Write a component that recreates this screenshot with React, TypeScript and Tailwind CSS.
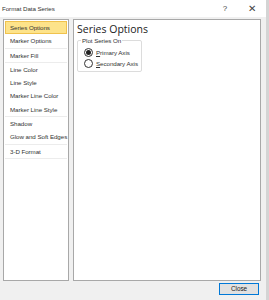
import { useState } from 'react';

const groups = [
  ['Series Options', 'Marker Options'],
  ['Marker Fill'],
  ['Line Color', 'Line Style', 'Marker Line Color', 'Marker Line Style'],
  ['Shadow', 'Glow and Soft Edges'],
  ['3-D Format'],
];

function Radio({ checked, label, hotkey }: { checked: boolean; label: string; hotkey: string }) {
  const rest = label.slice(1);
  return (
    <div className="flex items-center gap-[3px] h-[11px] whitespace-nowrap">
      <span className="w-[9px] h-[9px] shrink-0 rounded-full border border-[#333] bg-white flex items-center justify-center">
        {checked && <span className="w-[5px] h-[5px] rounded-full bg-[#222]" />}
      </span>
      <span>
        <span className="underline">{hotkey}</span>
        {rest}
      </span>
    </div>
  );
}

export default function App() {
  const [selected, setSelected] = useState('Series Options');

  return (
    <div className="w-[269px] h-[300px] bg-[#f0f0f0] flex flex-col text-[#333] font-['Liberation_Sans',sans-serif] text-[6.2px] tracking-[-0.05px] overflow-hidden">
      <div className="h-[17px] bg-white flex items-center pl-[2px] pr-[10px] border-r-[3px] border-[#d4d4d4]">
        <span>Format Data Series</span>
        <span className="ml-auto mr-[21px] text-[8px] text-[#444]">?</span>
        <span className="text-[10px] text-[#444] leading-none">✕</span>
      </div>

      <div className="flex gap-[4px] pl-[3px] pr-[5px] pt-[2px] h-[264px] border-r-[3px] border-[#d4d4d4]">
        <div className="w-[66px] bg-white border border-[#a8a8a8] pt-[1px] px-[1px]">
          {groups.map((g, gi) => (
            <div key={gi} className="border-b border-[#ececec]">
              {g.map((item) => (
                <div
                  key={item}
                  onClick={() => setSelected(item)}
                  className={
                    'h-[13.3px] flex items-center pl-[4px] whitespace-nowrap ' +
                    (selected === item ? 'bg-[#fde38a] border border-[#f0c24d]' : 'border border-transparent')
                  }
                >
                  {item}
                </div>
              ))}
            </div>
          ))}
        </div>

        <div className="flex-1 bg-white border border-[#a8a8a8] px-[3px] pt-[2px]">
          <div className="text-[10.5px] leading-[14px] text-[#222] font-['Open_Sans',sans-serif] tracking-normal">Series Options</div>
          <div className="relative mt-[4px] w-[65px] h-[32px] border border-[#dcdcdc] rounded-[2px] pt-[6px] pl-[6px] flex flex-col">
            <span className="absolute -top-[5px] left-[3px] bg-white px-[1px] leading-[9px] whitespace-nowrap">Plot Series On</span>
            <Radio checked label="Primary Axis" hotkey="P" />
            <Radio checked={false} label="Secondary Axis" hotkey="S" />
          </div>
        </div>
      </div>

      <div className="flex-1 flex justify-end items-start pt-[2px] pr-[7px] border-r-[3px] border-[#d4d4d4]">
        <button className="w-[40px] h-[12px] bg-[#e1e1e1] border border-[#0078d7] text-[6.4px] leading-none text-[#222]">
          Close
        </button>
      </div>
    </div>
  );
}
